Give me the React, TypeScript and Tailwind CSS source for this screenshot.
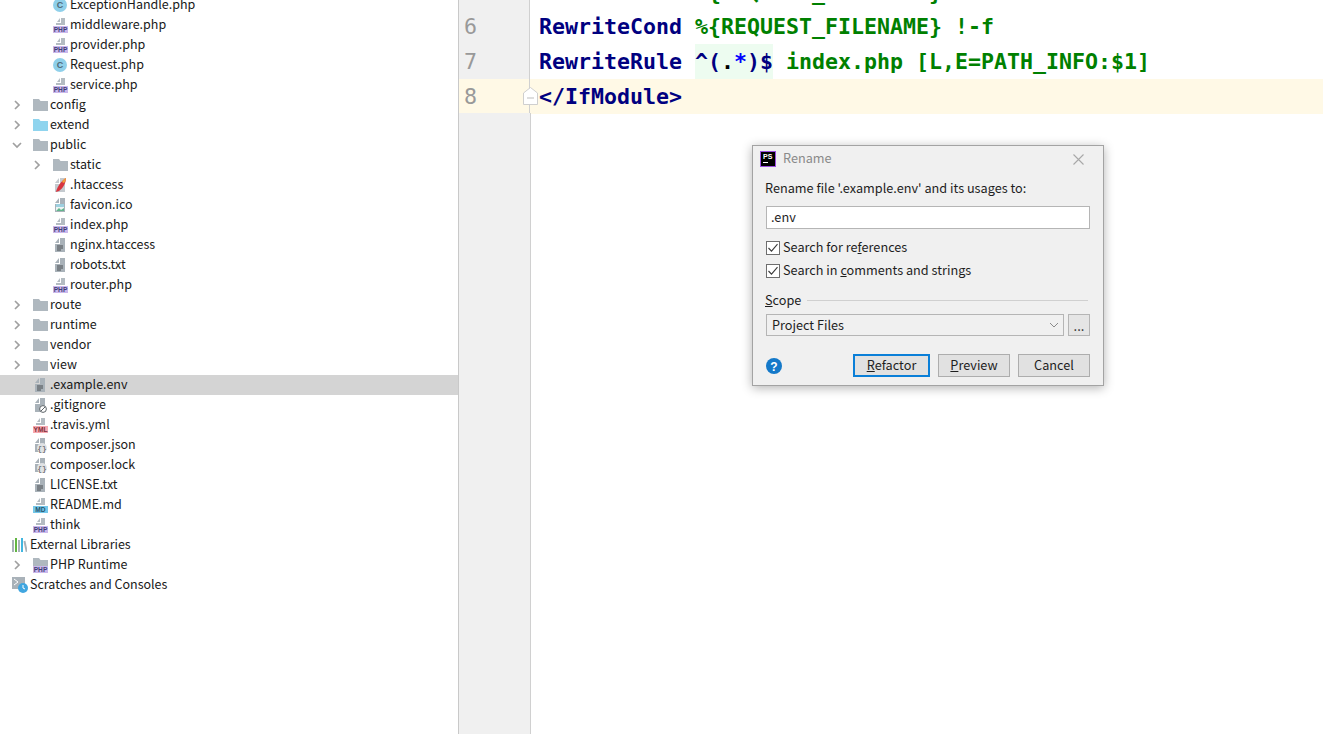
import React from "react";

const Chevron = ({ open }: { open?: boolean }) => (
  <svg width="10" height="10" viewBox="0 0 10 10" fill="none" stroke="#a0a0a0" strokeWidth="1.7">
    {open ? <path d="M1 3l4 4 4-4" /> : <path d="M3 1l4 4-4 4" />}
  </svg>
);

const Folder = ({ color = "#afb8bf" }: { color?: string }) => (
  <svg width="15" height="12" viewBox="0 0 15 12">
    <path d="M0 0h6l1.5 2H15v10H0z" fill={color} />
  </svg>
);

const Tag = ({ label, bg, fg, w = 15 }: { label: string; bg: string; fg: string; w?: number }) => (
  <svg width={w} height="16" viewBox={`0 0 ${w} 16`}>
    <path d="M4 5l3-4h0v4zM8 1h4v7H3V6h5z" fill="#b4bcc2" />
    <rect x="0" y="9" width={w} height="7" fill={bg} />
    <text x={w / 2} y="15" textAnchor="middle" fontSize="6.6" fontWeight="700" fontFamily="'Liberation Sans',sans-serif" fill={fg}>
      {label}
    </text>
  </svg>
);

const Php = () => <Tag label="PHP" bg="#cbb8ec" fg="#3f3f78" />;

const ClassIcon = () => (
  <svg width="14" height="14" viewBox="0 0 14 14">
    <circle cx="7" cy="7" r="7" fill="#8fd0ea" />
    <text x="7" y="10.2" textAnchor="middle" fontSize="9" fontWeight="700" fontFamily="'Liberation Sans',sans-serif" fill="#4f6a78">
      C
    </text>
  </svg>
);

const Sheet = () => <path d="M2 6l4-5v5zM7 1h5v14H2V7h5z" fill="#a9b2b9" />;

const TextFile = () => (
  <svg width="14" height="16" viewBox="0 0 14 16">
    <Sheet />
    <path d="M4 9h6M4 11h6M4 13h4" stroke="#4a4f52" strokeWidth="1" />
  </svg>
);

const Htaccess = () => (
  <svg width="14" height="16" viewBox="0 0 14 16">
    <path d="M2 6l4-5v5zM7 1h5v14H2V7h5z" fill="#c4cacf" />
    <path d="M3 15C4 10 8 4 13 1c0 5-3 10-7 13z" fill="#d8343f" />
    <path d="M9 5c1-2 2-3 4-4 0 2-1 4-2 5z" fill="#f2a13a" />
  </svg>
);

const Ico = () => (
  <svg width="14" height="16" viewBox="0 0 14 16">
    <Sheet />
    <rect x="3" y="7" width="8" height="7" fill="#eef4f3" />
    <rect x="3" y="7" width="8" height="3" fill="#9ed0e0" />
    <path d="M3 14l3-3 2 2 3-2v3z" fill="#62b58d" />
  </svg>
);

const GitIgnore = () => (
  <svg width="15" height="16" viewBox="0 0 15 16">
    <Sheet />
    <circle cx="10" cy="12" r="3.4" fill="#fff" stroke="#5d6468" strokeWidth="1" />
    <path d="M8 14l4-4" stroke="#5d6468" strokeWidth="1" />
  </svg>
);

const Json = () => (
  <svg width="15" height="16" viewBox="0 0 15 16">
    <Sheet />
    <circle cx="9" cy="11" r="5" fill="#dfe2e4" />
    <text x="9" y="14" textAnchor="middle" fontSize="8" fontFamily="'Liberation Mono',monospace" fill="#555">
      {"{}"}
    </text>
  </svg>
);

const Libs = () => (
  <svg width="15" height="14" viewBox="0 0 15 14">
    <rect x="0" y="2" width="2" height="12" fill="#a9b2b9" />
    <rect x="3" y="0" width="2" height="14" fill="#62b543" />
    <rect x="6" y="2" width="2" height="12" fill="#a9b2b9" />
    <rect x="9" y="0" width="2" height="14" fill="#40b6e0" />
    <rect x="12.5" y="3" width="2" height="11" fill="#a9b2b9" transform="rotate(-12 13 8)" />
  </svg>
);

const Scratch = () => (
  <svg width="18" height="16" viewBox="0 0 18 16">
    <path d="M0 0h13v9H8v3H0z" fill="#a9b2b9" />
    <path d="M2 2l4 3-4 3" fill="none" stroke="#fff" strokeWidth="1" />
    <circle cx="11" cy="11" r="5" fill="#40a6e0" />
    <path d="M11 8v3l2 1" fill="none" stroke="#fff" strokeWidth="1" />
  </svg>
);

const PhpRuntime = () => (
  <svg width="15" height="15" viewBox="0 0 15 15">
    <path d="M0 0h6l1.5 2H15v6H0z" fill="#afb8bf" />
    <rect x="0" y="8" width="15" height="7" fill="#cbb8ec" />
    <text x="7.5" y="14" textAnchor="middle" fontSize="6.6" fontWeight="700" fontFamily="'Liberation Sans',sans-serif" fill="#3f3f78">
      PHP
    </text>
  </svg>
);

type Row = { name: string; level: number; icon: React.ReactNode; chevron?: "open" | "closed"; selected?: boolean };

const rows: Row[] = [
  { name: "ExceptionHandle.php", level: 2, icon: <ClassIcon /> },
  { name: "middleware.php", level: 2, icon: <Php /> },
  { name: "provider.php", level: 2, icon: <Php /> },
  { name: "Request.php", level: 2, icon: <ClassIcon /> },
  { name: "service.php", level: 2, icon: <Php /> },
  { name: "config", level: 1, icon: <Folder />, chevron: "closed" },
  { name: "extend", level: 1, icon: <Folder color="#8fd4ee" />, chevron: "closed" },
  { name: "public", level: 1, icon: <Folder />, chevron: "open" },
  { name: "static", level: 2, icon: <Folder />, chevron: "closed" },
  { name: ".htaccess", level: 2, icon: <Htaccess /> },
  { name: "favicon.ico", level: 2, icon: <Ico /> },
  { name: "index.php", level: 2, icon: <Php /> },
  { name: "nginx.htaccess", level: 2, icon: <TextFile /> },
  { name: "robots.txt", level: 2, icon: <TextFile /> },
  { name: "router.php", level: 2, icon: <Php /> },
  { name: "route", level: 1, icon: <Folder />, chevron: "closed" },
  { name: "runtime", level: 1, icon: <Folder />, chevron: "closed" },
  { name: "vendor", level: 1, icon: <Folder />, chevron: "closed" },
  { name: "view", level: 1, icon: <Folder />, chevron: "closed" },
  { name: ".example.env", level: 1, icon: <TextFile />, selected: true },
  { name: ".gitignore", level: 1, icon: <GitIgnore /> },
  { name: ".travis.yml", level: 1, icon: <Tag label="YML" bg="#f7a8b0" fg="#7a2f3a" /> },
  { name: "composer.json", level: 1, icon: <Json /> },
  { name: "composer.lock", level: 1, icon: <Json /> },
  { name: "LICENSE.txt", level: 1, icon: <TextFile /> },
  { name: "README.md", level: 1, icon: <Tag label="MD" bg="#74c7ea" fg="#27566e" /> },
  { name: "think", level: 1, icon: <Php /> },
  { name: "External Libraries", level: 0, icon: <Libs /> },
  { name: "PHP Runtime", level: 1, icon: <PhpRuntime />, chevron: "closed" },
  { name: "Scratches and Consoles", level: 0, icon: <Scratch /> },
];

const indent: Record<number, string> = { 0: "pl-[12px]", 1: "pl-[33px]", 2: "pl-[53px]" };
const chevronPos: Record<number, string> = { 0: "left-[-8px]", 1: "left-[12px]", 2: "left-[32px]" };
const labelWidth: Record<number, string> = { 0: "w-[18px]", 1: "w-[17px]", 2: "w-[17px]" };

const TreeRow = ({ r }: { r: Row }) => (
  <div className={`relative flex h-[20px] items-center ${indent[r.level]} ${r.selected ? "bg-[#d4d4d4]" : ""}`}>
    {r.chevron && (
      <span className={`absolute top-[5px] ${chevronPos[r.level]}`}>
        <Chevron open={r.chevron === "open"} />
      </span>
    )}
    <span className={`flex h-[20px] shrink-0 items-center ${labelWidth[r.level]}`}>{r.icon}</span>
    <span className="mb-[2px] whitespace-nowrap text-[12.5px] leading-[20px] text-[#1a1a1a]">{r.name}</span>
  </div>
);

const kw = "text-[#000080]";
const str = "text-[#008000]";

const Line = ({ n, children, active }: { n: number; children: React.ReactNode; active?: boolean }) => (
  <div className={`flex h-[34.67px] items-center ${active ? "bg-[#fff9e6]" : ""}`}>
    <span className={`flex h-full w-[71px] shrink-0 items-center border-r border-[#d0d0d0] pl-[5px] text-[#999999] font-normal ${active ? "bg-[#fff9e6]" : "bg-[#f0f0f0]"}`}>
      {n}
    </span>
    <span className="whitespace-pre pl-[9px]">{children}</span>
  </div>
);

const Box = ({ label, u }: { label: string; u: number }) => (
  <label className="flex h-[14px] items-center gap-[3px]">
    <span className="flex h-[14px] w-[14px] items-center justify-center border border-[#6e6e6e] bg-white">
      <svg width="12" height="12" viewBox="0 0 12 12" fill="none" stroke="#3a3a3a" strokeWidth="1.1">
        <path d="M1.5 6l3 3.2 6-7" />
      </svg>
    </span>
    <span className="mb-[2px] text-[12.7px] text-[#1e1e1e]">
      {label.slice(0, u)}
      <span className="underline">{label[u]}</span>
      {label.slice(u + 1)}
    </span>
  </label>
);

const Btn = ({ w, first, rest, primary }: { w: string; first: string; rest: string; primary?: boolean }) => (
  <button className={`flex h-[23px] items-center justify-center bg-[#e1e1e1] pb-[2px] text-[12.7px] text-[#1e1e1e] ${w} ${primary ? "border-2 border-[#0a7fd8]" : "border border-[#adadad]"}`}>
    <span className="underline">{first}</span>
    {rest}
  </button>
);

export default function App() {
  return (
    <div className="relative flex h-[734px] w-[1323px] overflow-hidden bg-white font-['Noto_Sans_CJK_SC','Liberation_Sans',sans-serif]">
      <aside className="w-[459px] shrink-0 overflow-hidden border-r border-[#c9c9c9] bg-white">
        <div className="-mt-[5px]">
          {rows.map((r) => (
            <TreeRow key={r.name} r={r} />
          ))}
        </div>
      </aside>

      <main className="relative flex-1 overflow-hidden font-['DejaVu_Sans_Mono',monospace] text-[21.6px] font-bold">
        <div className="-mt-[24.6px]">
          <Line n={5}>
            <span className={kw}>RewriteCond</span> <span className={str}>%{"{"}REQUEST_FILENAME{"}"} !-d</span>
          </Line>
          <Line n={6}>
            <span className={kw}>RewriteCond</span> <span className={str}>%{"{"}REQUEST_FILENAME{"}"} !-f</span>
          </Line>
          <Line n={7}>
            <span className={kw}>RewriteRule</span> <span className="bg-[#edfcf0] py-[5px]"><span className="text-[#000080]">^(</span><span className="text-black">.</span><span className="text-[#0000ff]">*</span><span className="text-[#000080]">)$</span></span> <span className={str}>index.php [L,E=PATH_INFO:$1]</span>
          </Line>
          <Line n={8} active>
            <span className="text-[#000080]">&lt;/IfModule&gt;</span>
          </Line>
        </div>
        <div className="absolute left-[64px] top-[87px] flex h-[18px] w-[15px] items-center justify-center">
          <svg width="15" height="18" viewBox="0 0 15 18">
            <path d="M.5 17.5V6L7.5.5 14.5 6v11.5z" fill="#fff" stroke="#cfcfcf" />
            <path d="M4 11h7" stroke="#bdbdbd" />
          </svg>
        </div>
        <div className="absolute bottom-0 left-0 top-[113px] w-[72px] border-r border-[#d0d0d0] bg-[#f0f0f0]" />
      </main>

      <div className="absolute left-[752px] top-[145px] flex h-[241px] w-[352px] flex-col border border-[#a3a3a3] bg-[#f0f0f0] shadow-[0_2px_10px_rgba(0,0,0,0.3)]">
        <div className="flex h-[26px] shrink-0 items-center pl-[7px] pr-[19px]">
          <span className="flex h-[16px] w-[16px] flex-col border border-[#9b4fe0] bg-black px-[2px] pt-[1px] font-['Liberation_Sans',sans-serif] text-[7px] font-bold leading-[7px] text-white">
            PS
            <span className="mt-[2px] h-[1px] w-[5px] bg-white" />
          </span>
          <span className="mb-[2px] ml-[7px] text-[12.7px] text-[#8a8a8a]">Rename</span>
          <svg className="ml-auto" width="11" height="11" viewBox="0 0 11 11" stroke="#a8a8a8" strokeWidth="1.1">
            <path d="M.5.5l10 10M10.5.5l-10 10" />
          </svg>
        </div>
        <div className="flex flex-1 flex-col pl-[12px] pr-[13px]">
          <div className="mt-[6px] h-[20px] text-[12.7px] leading-[20px] text-[#1e1e1e]">Rename file '.example.env' and its usages to:</div>
          <div className="ml-[1px] mt-[8px] flex h-[23px] items-center border border-[#b5b5b5] bg-white pb-[1px] pl-[4px] text-[12.7px] text-[#1e1e1e]">.env</div>
          <div className="ml-[1px] mt-[12px] flex flex-col gap-[9px]">
            <Box label="Search for references" u={13} />
            <Box label="Search in comments and strings" u={10} />
          </div>
          <div className="mt-[12px] flex h-[20px] items-center gap-[6px] text-[12.7px] text-[#1e1e1e]">
            <span>
              <span className="underline">S</span>cope
            </span>
            <span className="mr-[2px] h-[1px] flex-1 bg-[#d0d0d0]" />
          </div>
          <div className="ml-[1px] mt-[4px] flex h-[22px] gap-[4px]">
            <div className="flex flex-1 items-center justify-between border border-[#b5b5b5] bg-[#f0f0f0] pl-[5px] pr-[4px] text-[12.7px] text-[#1e1e1e]">
              Project Files
              <svg width="10" height="6" viewBox="0 0 10 6" fill="none" stroke="#8a8a8a" strokeWidth="1">
                <path d="M1 1l4 4 4-4" />
              </svg>
            </div>
            <div className="flex w-[22px] items-center justify-center border border-[#b5b5b5] bg-[#e5e5e5] text-[13px] leading-[13px] text-[#1e1e1e]">...</div>
          </div>
          <div className="mt-[18px] ml-[1px] flex items-center">
            <svg width="16" height="16" viewBox="0 0 16 16">
              <circle cx="8" cy="8" r="8" fill="#1479c9" />
              <text x="8" y="12.5" textAnchor="middle" fontSize="12" fontWeight="700" fontFamily="'Liberation Sans',sans-serif" fill="#fff">
                ?
              </text>
            </svg>
            <div className="ml-auto flex gap-[8px]">
              <Btn w="w-[77px]" first="R" rest="efactor" primary />
              <Btn w="w-[72px]" first="P" rest="review" />
              <Btn w="w-[72px]" first="" rest="Cancel" />
            </div>
          </div>
        </div>
      </div>
    </div>
  );
}
